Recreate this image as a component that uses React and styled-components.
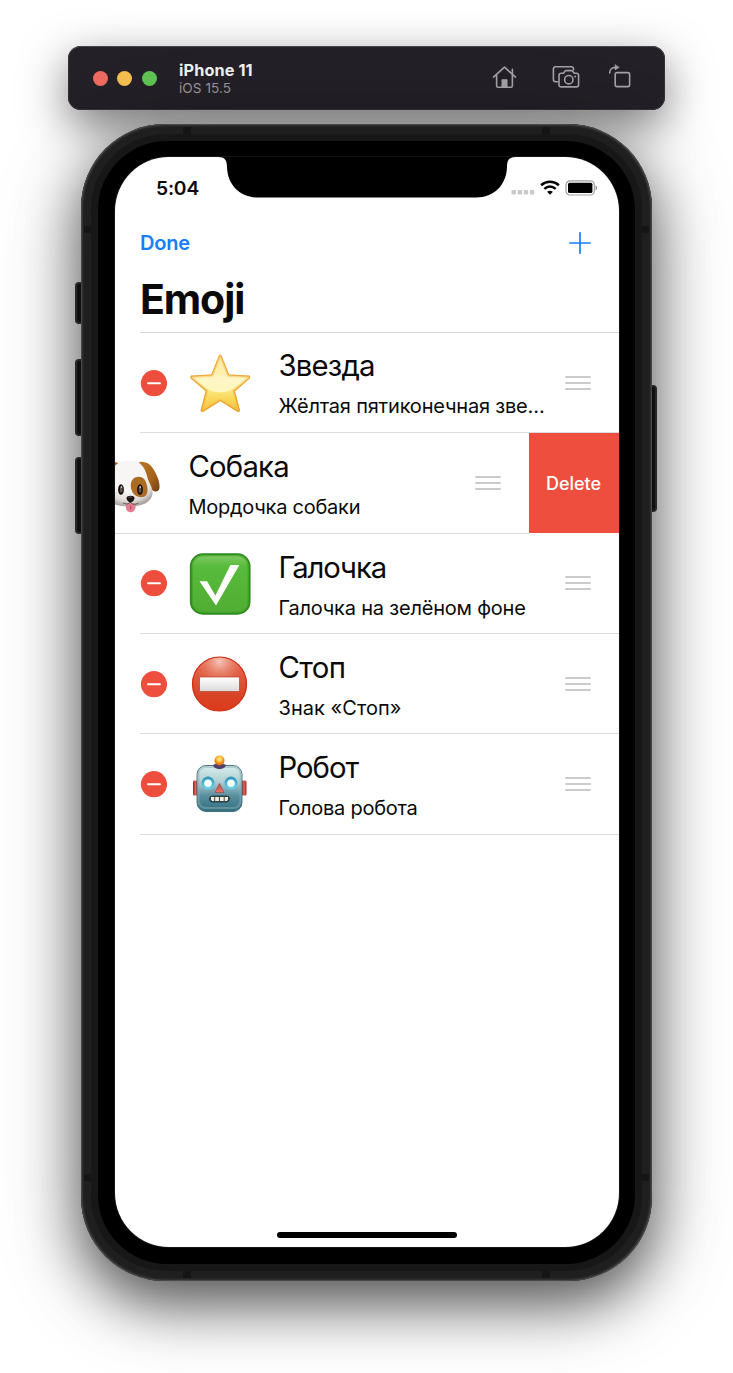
import React from "react";
import styled, { createGlobalStyle } from "styled-components";

const Global = createGlobalStyle`
  * { box-sizing: border-box; }
  body { margin: 0; background: #fff; font-family: Inter, "Liberation Sans", sans-serif; }
  svg { display: block; }
`;

const Page = styled.main`
  width: 733px; height: 1373px; overflow: hidden; padding-top: 46px;
  display: flex; flex-direction: column; align-items: center; gap: 14px;
`;

const Toolbar = styled.header`
  width: 597px; height: 64px; flex: none; padding: 0 32px 0 24.5px;
  display: flex; align-items: center;
  border-radius: 13px; background: #232027;
  box-shadow: inset 0 1px 0 #49474c, inset 0 0 0 1px #343137, 0 15px 46px rgba(0, 0, 0, 0.52);
`;
const Lights = styled.div`display: flex; gap: 9.5px;`;
const Light = styled.span`
  width: 15px; height: 15px; border-radius: 50%; background: ${(p) => p.$color};
`;
const Device = styled.div`
  margin-left: 22.5px; padding-top: 2px; flex: 1; display: flex; flex-direction: column;
`;
const DeviceName = styled.strong`
  font-size: 16.3px; line-height: 19px; font-weight: 700; color: #efeef0; letter-spacing: 0.1px;
`;
const DeviceOs = styled.span`
  font-size: 13.6px; line-height: 17px; color: #98969b; letter-spacing: 0.05px;
`;
const Tools = styled.div`display: flex; align-items: center; padding-bottom: 2px;`;

const PhoneWrap = styled.div`position: relative; width: 571px; height: 1157px; flex: none;`;
const SideButton = styled.i`
  position: absolute; ${(p) => (p.$right ? "right: -5px" : "left: -6px")};
  top: ${(p) => p.$top}px; height: ${(p) => p.$height}px; width: 10px;
  background: #191919; border: 2px solid #3d3d3d; border-radius: 4px;
`;
const Frame = styled.div`
  position: relative; height: 100%; padding: 10px; border-radius: 84px; background: #1f1f1f;
  box-shadow: inset 0 0 0 1px #484848, inset 0 0 2px 2px #363636,
    0 22px 56px rgba(0, 0, 0, 0.6), 0 16px 90px rgba(0, 0, 0, 0.22);
`;
const Rim = styled.div`height: 100%; padding: 7px; border-radius: 75px; background: #171717;`;
const Bezel = styled.div`height: 100%; padding: 16px 16.5px 17px 17px; border-radius: 69px; background: #000;`;
const Antenna = styled.i`
  position: absolute; background: #151515;
  ${(p) => (p.$side === "top" || p.$side === "bottom"
    ? `width: 8px; height: 7px; left: ${p.$at}px;`
    : `height: 7px; width: 7px; top: ${p.$at}px;`)}
  ${(p) => p.$side}: 3px;
`;
const Screen = styled.section`
  position: relative; height: 100%; overflow: hidden; background: #fff; border-radius: 54px;
  display: flex; flex-direction: column; box-shadow: 0 0 0 1px #141414;
`;
const Notch = styled.svg`position: absolute; top: 0; left: 103px;`;
const StatusBar = styled.div`
  height: 61px; padding: 0 21px 0 41px; display: flex; align-items: center; justify-content: space-between;
`;
const Clock = styled.time`font-size: 19.3px; font-weight: 600; letter-spacing: -0.2px; color: #0a0a0a;`;
const StatusIcons = styled.div`display: flex; align-items: center; gap: 5px;`;
const NavBar = styled.nav`
  height: 50px; padding: 0 27.500px 0 25px; display: flex; align-items: center; justify-content: space-between;
`;
const NavButton = styled.button`
  border: 0; padding: 0; background: none; color: #157efb; display: flex;
  font: 600 20px/24px Inter, sans-serif; letter-spacing: -0.2px;
`;
const Heading = styled.h1`
  margin: 0; height: 64px; padding: 7px 25px 0; font-size: 41px; line-height: 48px; font-weight: 700; letter-spacing: -1.1px; color: #0a0a0a;
`;
const List = styled.ul`
  list-style: none; margin: 0; padding: 0;
  &::before { content: ""; display: block; margin-left: 25px; height: 1px; background: #d9d9db; }
`;
const Item = styled.li`display: flex; height: 100.35px; overflow: hidden;`;
const ItemBody = styled.div`
  flex: none; width: 478.5px; margin-left: ${(p) => (p.$swiped ? -65 : 25)}px;
  border-bottom: 1px solid #dcdcde; display: flex; align-items: center; padding-right: 28px;
`;
const EmojiBox = styled.div`width: 62px; height: 62px; margin: 1px 28px 0 21.5px; flex: none;`;
const Texts = styled.div`width: 270px; flex: none; height: 100%; padding-top: ${(p) => p.$top}px;`;
const Name = styled.div`
  font-size: 29.3px; line-height: 40px; color: #0a0a0a; letter-spacing: ${(p) => p.$track}px; white-space: nowrap;
`;
const Note = styled.div`
  margin-top: 7px; font-size: 20px; line-height: 27px; color: #0a0a0a; letter-spacing: ${(p) => p.$track}px;
  white-space: nowrap;
`;
const Grip = styled.span`
  margin-left: auto; width: 26px; height: 14px; display: flex; flex-direction: column; justify-content: space-between;
  &::before, &::after { content: ""; height: 2px; background: #cbcbcd; border-radius: 1px; }
`;
const GripLine = styled.i`height: 2px; background: #cbcbcd; border-radius: 1px;`;
const DeleteButton = styled.button`
  flex: none; width: 90px; height: 99.5px; border: 0; padding: 1px 0 0; background: #ee4e3d; color: #fff;
  font: 500 18px/24px Inter, sans-serif; letter-spacing: 0;
`;
const HomeIndicator = styled.div`
  width: 180px; height: 6px; border-radius: 3px; background: #000; margin: auto auto 9.5px;
`;

const HomeIcon = () => (
  <svg width="25" height="25" viewBox="0 0 26 26" fill="none" stroke="#a4a2a7" strokeWidth="1.7" strokeLinecap="round" strokeLinejoin="round">
    <path d="M1.500 12.500 13 2.300l11.500 10.200M4.800 11v10.600c0 1 .5 1.500 1.500 1.500h13.400c1 0 1.500-.5 1.500-1.500V4.500" />
    <path d="M10.300 23v-7.800h5.400V23z" fill="#a4a2a7" strokeWidth=".8" />
  </svg>
);
const CameraIcon = () => (
  <svg width="28" height="26" viewBox="0 0 28 26" fill="none" stroke="#a4a2a7" strokeWidth="1.6" strokeLinejoin="round" style={{ margin: "0 27.5px 0 34.5px" }}>
    <path d="M6.300 17.700H3.600c-1.400 0-2.200-.8-2.200-2.200V5c0-1.400.8-2.200 2.200-2.200h15.800c1.400 0 2.100.8 2.100 2.200v1.400" />
    <path d="M9.200 9.200h2.300l1.500-2.100c.3-.4.6-.5 1-.5h5.700c.5 0 .8.2 1 .5l1.500 2.100h2.200c1.400 0 2.200.8 2.200 2.200v9.300c0 1.400-.8 2.200-2.200 2.200H9.200c-1.400 0-2.200-.8-2.200-2.200v-9.300c0-1.400.8-2.200 2.200-2.200z" />
    <circle cx="16.800" cy="15.700" r="4.200" /><circle cx="23.200" cy="12.400" r="1" fill="#a4a2a7" stroke="none" />
  </svg>
);
const RotateIcon = () => (
  <svg width="26" height="26" viewBox="0 0 26 26" fill="none" stroke="#a4a2a7" strokeWidth="1.6" strokeLinecap="round" strokeLinejoin="round">
    <rect x="8.200" y="8.600" width="14.400" height="14" rx="1.800" />
    <path d="M2.700 9C2.700 5.200 5 3.300 9 3.500" /><path d="M8 .9v5L12 3.400z" fill="#a4a2a7" strokeWidth=".6" />
  </svg>
);
const SignalIcon = () => (
  <svg width="24" height="16" fill="#cbcbcb">
    {[0, 6.1, 12.2, 18.3].map((x) => <rect key={x} x={x + 0.5} y="10" width="4.5" height="4.6" rx=".8" />)}
  </svg>
);
const WifiIcon = () => (
  <svg width="20" height="16" viewBox="0 0 20 16" fill="none" stroke="#050505" strokeWidth="2.5">
    <path d="M1.100 5.200C6.300.6 13.700.6 18.900 5.200M4.300 8.900c3.500-3.100 7.900-3.100 11.400 0" />
    <path d="M7.100 11.800c1.800-1.400 4-1.400 5.800 0L10 14.800z" fill="#050505" stroke="none" />
  </svg>
);
const BatteryIcon = () => (
  <svg width="33" height="16" viewBox="0 0 33 16" fill="none">
    <rect x="1" y=".8" width="28.300" height="14.200" rx="4" stroke="#9d9d9d" strokeWidth="1.200" />
    <rect x="3" y="2.800" width="24.400" height="10.200" rx="1.500" fill="#000" /><path d="M30.700 5.500c1.700.7 1.700 4.100 0 4.800z" fill="#777" />
  </svg>
);
const PlusIcon = () => (
  <svg width="22" height="22" stroke="#157efb" strokeWidth="1.7" strokeLinecap="round"><path d="M11 .8v20.400M.8 11h20.400" /></svg>
);
const MinusIcon = () => (
  <svg width="27" height="28"><circle cx="14" cy="14.200" r="13.100" fill="#ee4e3d" /><path d="M8 14.200h12" stroke="#fff" strokeWidth="1.900" strokeLinecap="round" /></svg>
);
const RemoveButton = styled.span`flex: none; width: 27px;`;

const starPath = "M29.1 4.400c.8-1.900 2.500-1.900 3.300 0l7.200 18.200 19.200 1.200c2.100.1 2.700 1.800 1.100 3.200L45.500 39.400l4.700 18.300c.5 2-.9 3-2.700 1.900L30.800 49.300 14.100 59.600c-1.800 1.100-3.200.1-2.700-1.900l4.800-18.300L1.600 27c-1.600-1.400-1-3.100 1.100-3.200l19.100-1.200z";
const Star = () => (
  <svg width="62" height="62" viewBox="-.5 .2 62 62">
    <defs>
      <linearGradient id="star" x2="0" y2="1"><stop stopColor="#ffe9a5" /><stop offset=".48" stopColor="#fff3b0" /><stop offset=".72" stopColor="#fbdc62" /><stop offset="1" stopColor="#f3bd36" /></linearGradient>
      <linearGradient id="starEdge" x2="0" y2="1"><stop stopColor="#f2ae48" /><stop offset="1" stopColor="#e89d25" /></linearGradient>
      <linearGradient id="starGlow" x2="0" y2="1"><stop stopColor="#fff8da" stopOpacity=".4" /><stop offset="1" stopColor="#fffccc" stopOpacity=".9" /></linearGradient>
      <clipPath id="starClip"><path d={starPath} /></clipPath>
    </defs>
    <g clipPath="url(#starClip)">
      <path fill="url(#star)" d="M0 0h62v62H0z" /><path fill="url(#starGlow)" d="M0 23h62L45 36c-9 6-20 6-29 0z" />
      <path d={starPath} fill="none" stroke="#f3bd55" strokeOpacity=".45" strokeWidth="5" />
      <path d={starPath} fill="none" stroke="url(#starEdge)" strokeWidth="2.400" />
    </g>
  </svg>
);
const Dog = () => (
  <svg width="62" height="62" viewBox="0 .5 62 62">
    <defs>
      <radialGradient id="dog" cx=".5" cy=".35" r=".65"><stop offset=".5" stopColor="#f8f6f4" /><stop offset=".82" stopColor="#dfdcda" /><stop offset="1" stopColor="#aaa29d" /></radialGradient>
      <linearGradient id="ear" x2="1" y2="1"><stop stopColor="#b97824" /><stop offset=".6" stopColor="#a5621b" /><stop offset="1" stopColor="#704014" /></linearGradient>
    </defs>
    <path d="M18 10C8 7 3 17 1 28c-1 8 1 12 6 10 6-2 9-19 13-26z" fill="url(#ear)" />
    <path d="M40 9.500c11-2 16 8 19.500 18 2.500 9 .5 13-5 11-6-3-10-19-14.500-29z" fill="url(#ear)" />
    <path d="M30 8.500C41 7.500 46 14 48.500 25c1.500 6 5.500 10 5 16-1 9-10.500 13-23.500 13S6 50 5.500 41c0-5 2.500-8 3.500-14C11 16 17 8.500 30 8.500z" fill="url(#dog)" />
    <path d="M36 25c8-3 12 3 12.500 12 .3 7-4.500 9-10 7-8-3-9-16-2.500-19z" fill="#ac6b22" />
    <ellipse cx="22" cy="37" rx="2.900" ry="5.300" fill="#160d09" /><ellipse cx="41" cy="37" rx="2.900" ry="5.300" fill="#160d09" />
    <ellipse cx="22.300" cy="37" rx="1.400" ry="3.200" fill="#60534d" /><ellipse cx="41" cy="37" rx="1.400" ry="3.200" fill="#60534d" />
    <circle cx="22.500" cy="34.500" r=".8" fill="#fff" /><circle cx="41.200" cy="34.500" r=".8" fill="#fff" />
    <path d="M27.300 51h8.800c1.500 4-.2 8.800-4.400 8.800s-6-4.600-4.400-8.800z" fill="#e47e93" /><path d="M31.700 53v4" stroke="#ad435c" />
    <path d="M24 50.500q4.500 2.500 7.500-.5 3 3.500 8 .5M31.500 47v3" fill="none" stroke="#6a5b54" strokeWidth="1" />
    <path d="M27.500 45.500c0-3 8-3 8 0 0 2.200-2.500 4.500-4 4.500s-4-2.300-4-4.500z" fill="#1b1514" /><path d="M29.500 44.700h3" stroke="#77716e" strokeWidth=".8" />
  </svg>
);
const Check = () => (
  <svg width="62" height="62" viewBox="-.5 0 62 62">
    <defs><linearGradient id="check" x2="0" y2="1"><stop stopColor="#83cd67" /><stop offset=".2" stopColor="#58bb3c" /><stop offset="1" stopColor="#50ad33" /></linearGradient></defs>
    <rect x="1.300" y="1.300" width="58.800" height="59.400" rx="12" fill="url(#check)" stroke="#2f8b1e" strokeWidth="1.900" />
    <rect x="2.900" y="2.900" width="55.600" height="56.200" rx="10.500" fill="none" stroke="#3c9d28" opacity=".65" />
    <path d="M10 28.200h7.600l8.300 14.200 15-30.400h9L26.500 52.500z" fill="#fff" />
  </svg>
);
const Stop = () => (
  <svg width="62" height="62" viewBox="0 0 62 62">
    <defs>
      <linearGradient id="stop" x2="0" y2="1"><stop stopColor="#e26a4d" /><stop offset=".45" stopColor="#dd5438" /><stop offset=".72" stopColor="#d84325" /><stop offset="1" stopColor="#dc3b1b" /></linearGradient>
      <radialGradient id="stopGlow" cx=".5" cy=".08" r=".5"><stop stopColor="#f7c8bc" /><stop offset="1" stopColor="#e36c51" stopOpacity="0" /></radialGradient>
      <linearGradient id="bar" x2="0" y2="1"><stop stopColor="#fff" /><stop offset="1" stopColor="#dadada" /></linearGradient>
    </defs>
    <circle cx="30.500" cy="31" r="27" fill="url(#stop)" /><circle cx="30.500" cy="31" r="27" fill="url(#stopGlow)" stroke="#cf2910" strokeWidth="1.200" />
    <rect x="10.500" y="24" width="40" height="14.500" rx="1" fill="url(#bar)" stroke="#b84025" strokeWidth=".7" />
  </svg>
);
const Robot = () => (
  <svg width="62" height="62" viewBox="0 .5 62 62">
    <defs>
      <linearGradient id="head" x2="0" y2="1"><stop stopColor="#d9eeed" /><stop offset=".35" stopColor="#b1cfd3" /><stop offset=".65" stopColor="#598f9f" /><stop offset="1" stopColor="#306f81" /></linearGradient>
      <linearGradient id="redEar" x2="1"><stop stopColor="#8c1e22" /><stop offset=".5" stopColor="#e56658" /><stop offset="1" stopColor="#9d2629" /></linearGradient>
      <linearGradient id="eye" x2="0" y2="1"><stop stopColor="#2d91b5" /><stop offset="1" stopColor="#68d7f0" /></linearGradient>
      <radialGradient id="lamp" cx=".5" cy=".35"><stop stopColor="#fff09a" /><stop offset=".5" stopColor="#ffc343" /><stop offset="1" stopColor="#df7b0e" /></radialGradient>
      <linearGradient id="nose" x2="0" y2="1"><stop stopColor="#b74a45" /><stop offset="1" stopColor="#ef756a" /></linearGradient>
    </defs>
    <rect x="4" y="27" width="5" height="15" rx="1.500" fill="url(#redEar)" /><rect x="52.500" y="27" width="5" height="15" rx="1.500" fill="url(#redEar)" />
    <rect x="8" y="12" width="45" height="46" rx="9" fill="url(#head)" stroke="#3d6974" strokeWidth=".9" />
    <rect x="9.500" y="13.500" width="42" height="41" rx="7" fill="none" stroke="#8fb0af" strokeWidth="2" opacity=".5" />
    <path d="M24 11.500c4-2.500 9-2.500 13 0-1 5.500-12 5.500-13 0z" fill="#533e70" /><circle cx="30.500" cy="7" r="5" fill="url(#lamp)" />
    {[19, 42].map((x) => <g key={x}><circle cx={x} cy="29.500" r="6.500" fill="url(#eye)" /><circle cx={x} cy="29.800" r="3.800" fill="#f4feff" /></g>)}
    <path d="m30.500 30 4.500 9h-9z" fill="url(#nose)" stroke="#983d41" strokeWidth=".6" />
    <rect x="20.500" y="42.500" width="20" height="6" rx="3" fill="#384b50" stroke="#243b42" strokeWidth="1" />
    <path d="M22 43.500h3.200v4H23l-1-1.500zM26.200 43.500h3.700v4h-3.700zM31 43.500h3.700v4H31zM35.700 43.500H39V46l-1 1.500h-2.300z" fill="#f3f0df" />
  </svg>
);

const emojis = [
  { icon: Star, name: "Звезда", note: "Жёлтая пятиконечная зве…", nameTrack: -0.8, noteTrack: -0.2, top: 12.5 },
  { icon: Dog, name: "Собака", note: "Мордочка собаки", nameTrack: -0.8, noteTrack: -0.25, swiped: true },
  { icon: Check, name: "Галочка", note: "Галочка на зелёном фоне", nameTrack: -1.1, noteTrack: -0.2, top: 14.3 },
  { icon: Stop, name: "Стоп", note: "Знак «Стоп»", nameTrack: -0.6, noteTrack: 0.05 },
  { icon: Robot, name: "Робот", note: "Голова робота", nameTrack: -1, noteTrack: -0.25, top: 14.1 },
];

const EmojiItem = ({ icon: Icon, name, note, nameTrack, noteTrack, swiped, top = 13.7 }) => (
  <Item>
    <ItemBody $swiped={swiped}>
      <RemoveButton><MinusIcon /></RemoveButton>
      <EmojiBox><Icon /></EmojiBox>
      <Texts $top={top}><Name $track={nameTrack}>{name}</Name><Note $track={noteTrack}>{note}</Note></Texts>
      <Grip><GripLine /></Grip>
    </ItemBody>
    {swiped && <DeleteButton>Delete</DeleteButton>}
  </Item>
);

export default function App() {
  return (
    <Page>
      <Global />
      <Toolbar>
        <Lights><Light $color="#ed6b60" /><Light $color="#f5bf50" /><Light $color="#61c454" /></Lights>
        <Device><DeviceName>iPhone 11</DeviceName><DeviceOs>iOS 15.5</DeviceOs></Device>
        <Tools><HomeIcon /><CameraIcon /><RotateIcon /></Tools>
      </Toolbar>
      <PhoneWrap>
        <SideButton $top={158} $height={42} />
        <SideButton $top={235} $height={77} />
        <SideButton $top={333} $height={77} />
        <SideButton $right $top={261} $height={127} />
        <Frame>
          <Rim>
            <Bezel>
              <Screen>
                <Notch width="298" height="41" viewBox="0 0 298 41">
                  <path d="M0 0C7 0 8.800 3 9 10c.5 18 13 30.500 31 30.500h218c18 0 30.500-12.500 31-30.500 0-7 2-10 9-10z" />
                </Notch>
                <StatusBar>
                  <Clock>5:04</Clock>
                  <StatusIcons><SignalIcon /><WifiIcon /><BatteryIcon /></StatusIcons>
                </StatusBar>
                <NavBar><NavButton>Done</NavButton><NavButton aria-label="Add"><PlusIcon /></NavButton></NavBar>
                <Heading>Emoji</Heading>
                <List>{emojis.map((e) => <EmojiItem key={e.name} {...e} />)}</List>
                <HomeIndicator />
              </Screen>
            </Bezel>
          </Rim>
          <Antenna $side="top" $at={102} /><Antenna $side="top" $at={461} />
          <Antenna $side="bottom" $at={102} /><Antenna $side="bottom" $at={461} />
          <Antenna $side="left" $at={102} /><Antenna $side="right" $at={102} />
          <Antenna $side="left" $at={1050} /><Antenna $side="right" $at={1050} />
        </Frame>
      </PhoneWrap>
    </Page>
  );
}
